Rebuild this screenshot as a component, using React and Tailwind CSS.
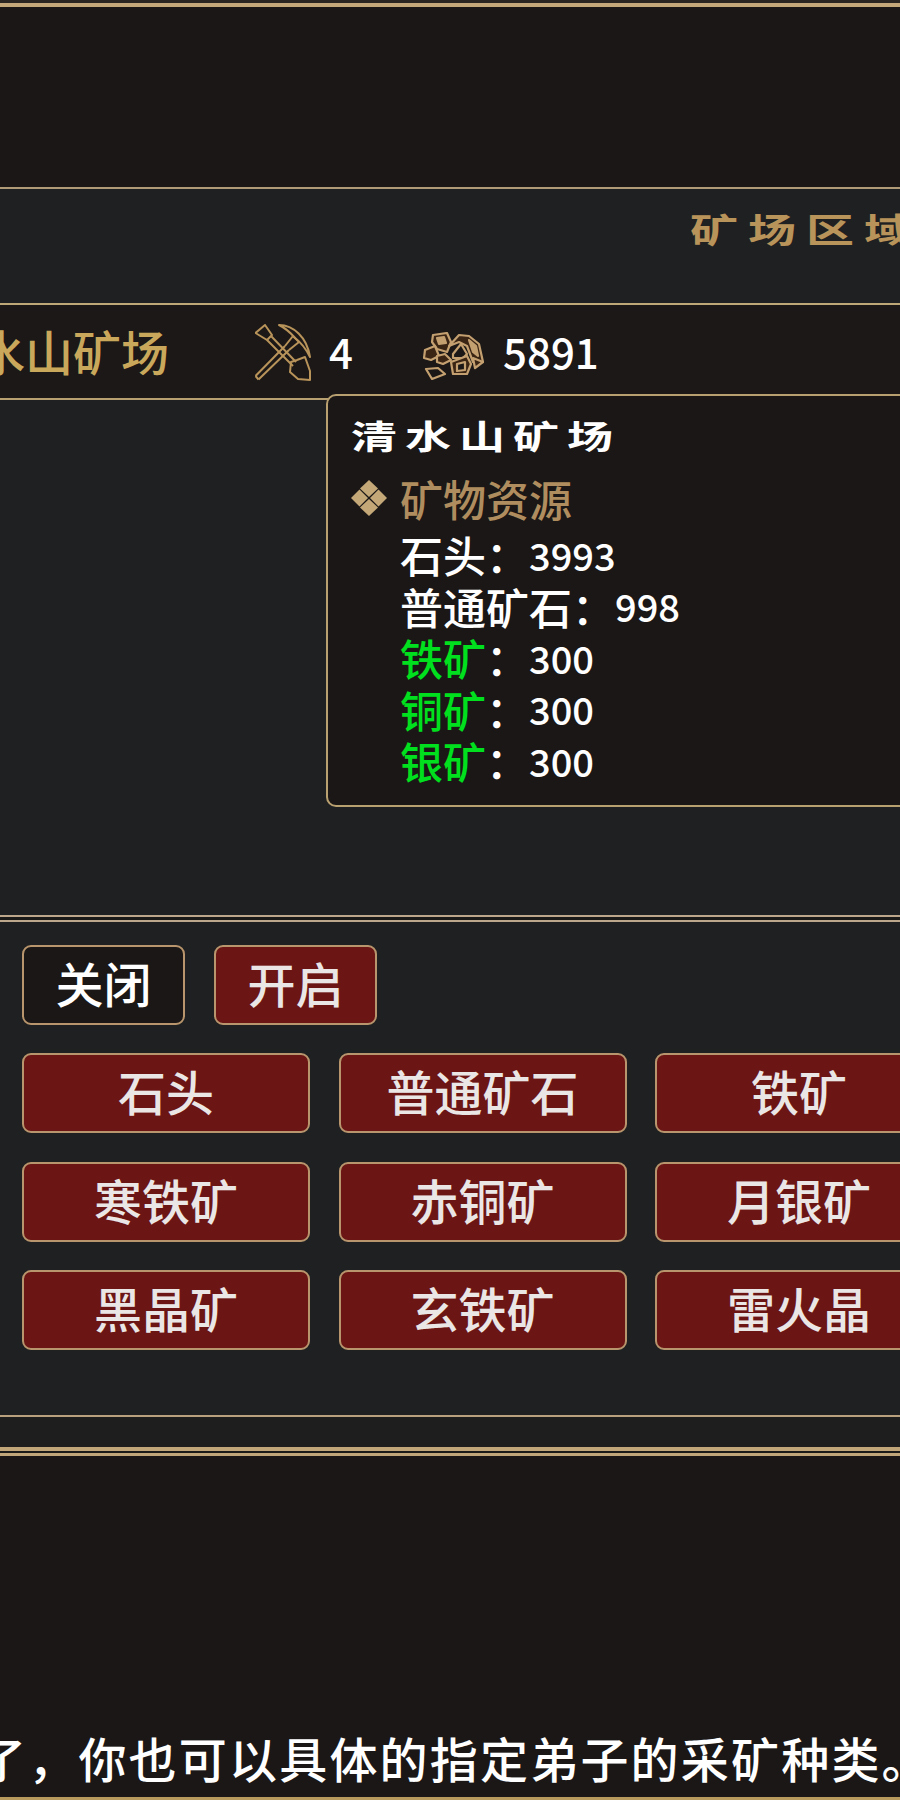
const cjk = { fontFamily: '"Noto Sans CJK SC", "Noto Sans", sans-serif' };

function PickIcon() {
  return (
    <svg width="56" height="58" viewBox="0 0 56 58" fill="none" stroke="#b8935a" strokeWidth="2" strokeLinejoin="round">
      <path d="M0.5 10 L10 2 L17 12 L12 17 Z" />
      <path d="M12 17 L38 43 M16 13 L41 39" />
      <path d="M36 39 L42 37 L50 34 L55 48 L55 57 L43 56 L35 49 Z" />
      <path d="M0.5 53 L30 23 M3.5 56.5 L34 27" />
      <path d="M0.5 53 L3.5 56.5" />
      <path d="M24 2 C38 2 52 14 55 34 C50 24 44 18 40 15 C35 9 30 5 24 2 Z" />
      <path d="M30 23 L38 13 L44 19 L34 27" />
    </svg>
  );
}

function OreIcon() {
  return (
    <svg width="62" height="48" viewBox="0 0 62 48" fill="#3a2414" stroke="#c4a070" strokeWidth="2.2" strokeLinejoin="round">
      <path d="M10 3 L24 1 L28 10 L24 20 L14 17 L9 10 Z" />
      <path d="M14 6 L21 5 L23 11 L16 12 Z" fill="#c4a070" />
      <path d="M2 18 L12 14 L16 24 L8 28 L1 26 Z" />
      <path d="M14 24 L22 22 L28 28 L20 32 L14 30 Z" />
      <path d="M26 14 L36 3 L46 4 L56 12 L60 30 L50 30 L44 14 L36 10 Z" />
      <path d="M46 8 L53 14 L55 24 L50 20 Z" fill="#c4a070" />
      <path d="M30 22 L38 12 L44 22 L40 26 L30 26 Z" fill="#1a1716" />
      <path d="M28 30 L44 24 L48 32 L44 42 L30 42 Z" />
      <path d="M34 32 L42 30 L42 38 L34 39 Z" fill="#1a1716" />
      <path d="M50 26 L60 30 L52 36 Z" />
      <path d="M3 37 L15 36 L22 42 L9 47 Z" fill="#1a1716" />
    </svg>
  );
}

function DiamondIcon() {
  return (
    <svg width="36" height="36" viewBox="0 0 36 36" fill="#c4a878">
      <path d="M18 0 L27 8.5 L18 17 L9 8.5 Z" />
      <path d="M18 19 L27 27.5 L18 36 L9 27.5 Z" />
      <path d="M8.5 9.5 L17 18 L8.5 26.5 L0 18 Z" />
      <path d="M27.5 9.5 L36 18 L27.5 26.5 L19 18 Z" />
    </svg>
  );
}

function Btn({ children, dark, w }) {
  return (
    <div
      className={`flex h-[80px] items-center justify-center rounded-[9px] border-2 border-[#b8956c] pb-[6px] text-[48px] font-medium leading-none ${dark ? 'bg-[#1a1716] text-white' : 'bg-[#6b1514] text-[#ebe6e6]'} ${w}`}
    >
      {children}
    </div>
  );
}

function Row({ label, green, value }) {
  return (
    <div className="flex h-[51.5px] items-center text-[43px] font-medium leading-none text-white">
      <span className={`${green ? 'text-[#00e01e]' : ''}`}>{label}</span>
      <span className="text-white">：</span>
      <span className="text-[38px]">{value}</span>
    </div>
  );
}

const ores = ['石头', '普通矿石', '铁矿', '寒铁矿', '赤铜矿', '月银矿', '黑晶矿', '玄铁矿', '雷火晶'];

export default function App() {
  return (
    <div className="relative h-[1800px] w-[900px] overflow-hidden bg-[#1a1716]" style={cjk}>
      <div className="h-[3px] bg-[#2a2520]" />
      <div className="h-[4px] bg-[#c4a87a]" />
      <div className="h-[180px]" />
      <div className="h-[2px] bg-[#b09a78]" />

      <div className="flex h-[114px] items-start bg-[#1f2021] pl-[690px] pt-[11px]">
        <span className="inline-block scale-y-[0.72] whitespace-nowrap text-[48px] font-bold leading-[56px] tracking-[10px] text-[#b8935a]">矿场区域</span>
      </div>
      <div className="h-[2px] bg-[#bfa878]" />

      <div className="flex h-[93px] items-center bg-[#1b1817]">
        <span className="-ml-[71px] -mt-[4px] w-[310px] shrink-0 whitespace-nowrap text-[48px] font-medium leading-none text-[#c9a85c]">清水山矿场</span>
        <div className="ml-[16px]"><PickIcon /></div>
        <span className="ml-[18px] -mt-[2px] w-[60px] text-[42px] font-medium leading-none text-white">4</span>
        <div className="ml-[34px] mt-[8px]"><OreIcon /></div>
        <span className="ml-[18px] -mt-[2px] text-[42px] font-medium leading-none text-white">5891</span>
      </div>
      <div className="h-[2px] bg-[#b8a070]" />

      <div className="h-[515px] bg-[#1f2021]" />
      <div className="h-[2px] bg-[#bca68c]" />
      <div className="h-[3px] bg-[#1c1a19]" />
      <div className="h-[2px] bg-[#bca68c]" />

      <div className="h-[493px] bg-[#1f2021] pl-[22px] pt-[23px]">
        <div className="flex gap-[29px]">
          <Btn dark w="w-[163px]">关闭</Btn>
          <Btn w="w-[163px]">开启</Btn>
        </div>
        <div className="mt-[28px] grid w-[920px] grid-cols-[288px_288px_288px] gap-x-[28.5px] gap-y-[28.5px]">
          {ores.map((o) => (
            <Btn key={o}>{o}</Btn>
          ))}
        </div>
      </div>

      <div className="h-[2px] bg-[#b8a07e]" />
      <div className="h-[30px] bg-[#1e1e1f]" />
      <div className="h-[4px] bg-[#c0a678]" />
      <div className="h-[2px] bg-[#1c1a19]" />
      <div className="h-[3px] bg-[#c0a678]" />

      <div className="flex h-[341px] items-end pb-[10px]">
        <span className="-ml-[22px] whitespace-nowrap text-[48px] font-medium leading-[60px] tracking-[2.2px] text-white">了，你也可以具体的指定弟子的采矿种类。</span>
      </div>
      <div className="h-[3px] bg-[#b89a5e]" />

      <div className="absolute left-[326px] top-[394px] h-[413px] w-[600px] rounded-[10px] border-2 border-[#b8a070] bg-[#1a1716] pl-[23px] pt-[14px]">
        <div className="origin-left scale-y-[0.72] whitespace-nowrap text-[46px] font-bold leading-[50px] tracking-[8px] text-white">清水山矿场</div>
        <div className="mt-[16px] flex items-center gap-[13px]">
          <DiamondIcon />
          <span className="text-[43px] font-medium leading-[44px] text-[#b08d5e]">矿物资源</span>
        </div>
        <div className="ml-[49px] mt-[9px]">
          <Row label="石头" value="3993" />
          <Row label="普通矿石" value="998" />
          <Row label="铁矿" green value="300" />
          <Row label="铜矿" green value="300" />
          <Row label="银矿" green value="300" />
        </div>
      </div>
    </div>
  );
}
